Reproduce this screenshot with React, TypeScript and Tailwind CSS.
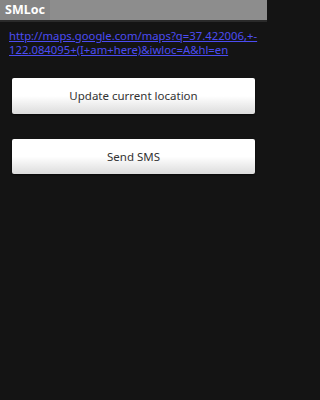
export default function App() {
  return (
    <div className="min-h-screen w-full bg-[#141414]">
      <div className="flex h-[400px] w-[267px] flex-col bg-[#141414] font-['Noto_Sans',sans-serif]">
        <div className="flex h-[20px] items-center bg-[#8d8d8d]">
          <div className="flex h-full items-center bg-[#858585] px-[5px]">
            <span className="text-[12.5px] font-bold leading-none text-white">SMLoc</span>
          </div>
        </div>
        <div className="h-[2px] bg-[#2a2a2a]" />
        <div className="flex flex-col px-[9px] pt-[7px]">
          <a href="#" className="text-[11.3px] leading-[14px] text-[#4c4cf2] underline [overflow-wrap:anywhere]">
            http://maps.google.com/maps?q=37.422006,+-<wbr />122.084095+(I+am+here)&amp;iwloc=A&amp;hl=en
          </a>
        </div>
        <div className="flex flex-col gap-[25px] px-[12px] pt-[21px]">
          <button className="h-[36px] w-full rounded-[2px] bg-gradient-to-b from-white via-white to-[#dcdcdc] text-[11.5px] text-[#333] shadow-[0_1px_2px_rgba(0,0,0,0.6)]">
            Update current location
          </button>
          <button className="h-[35px] w-full rounded-[2px] bg-gradient-to-b from-white via-white to-[#dcdcdc] text-[11.5px] text-[#333] shadow-[0_1px_2px_rgba(0,0,0,0.6)]">
            Send SMS
          </button>
        </div>
      </div>
    </div>
  )
}
